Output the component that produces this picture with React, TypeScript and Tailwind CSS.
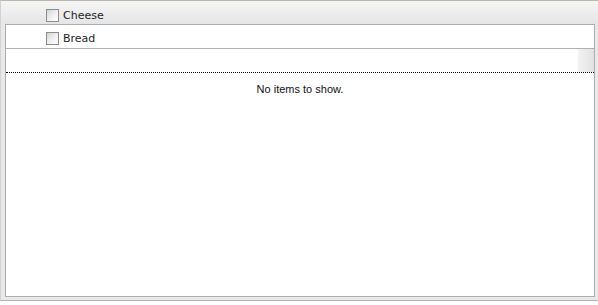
const Check = ({ label }: { label: string }) => (
  <label className="flex items-center gap-[4px] text-[11px] leading-[13px] text-[#1e1e1e] font-['DejaVu_Sans',sans-serif]">
    <span className="block w-[13px] h-[13px] border border-[#8c8c8c] bg-gradient-to-br from-[#d4d4d4] via-[#efefef] to-white" />
    {label}
  </label>
)

export default function App() {
  return (
    <div className="w-[598px] h-[305px] bg-white">
      <div className="h-[301px] flex flex-col border-t border-t-[#bcb8ac] border-l border-l-[#d2d2d2] border-b border-b-[#b2b2b2] bg-[#e9e9e9]">
        {/* group header */}
        <div className="h-[23px] shrink-0 flex items-start pt-[8px] pl-[45px] bg-gradient-to-b from-[#f6f6f6] to-[#e5e5e5]">
          <Check label="Cheese" />
        </div>

        {/* grid */}
        <div className="flex-1 ml-[4px] mr-[3px] mb-[3px] flex flex-col border border-[#aaaeb4] bg-white">
          <div className="h-[24px] shrink-0 flex items-start pt-[7px] pl-[40px] border-b border-[#b0b0b0]">
            <Check label="Bread" />
          </div>
          <div className="h-[24px] shrink-0 flex border-b border-dotted border-black">
            <div className="flex-1" />
            <div className="w-[16px] bg-gradient-to-r from-[#f2f2f2] to-[#e2e2e2]" />
          </div>
          <div className="pt-[9px] text-center text-[11px] leading-[14px] text-[#111] font-['Liberation_Sans',Arial,sans-serif]">
            No items to show.
          </div>
        </div>
      </div>
    </div>
  )
}
